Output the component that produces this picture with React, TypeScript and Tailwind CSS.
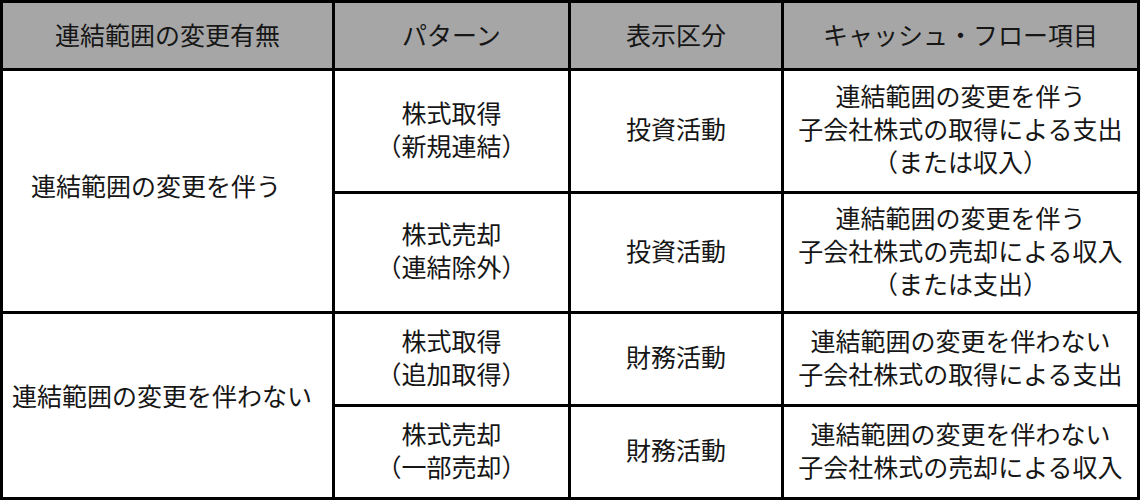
import React from "react";

const font = { fontFamily: '"Noto Sans CJK JP", "Noto Sans", sans-serif' };

function Cell({ children, className = "" }: { children: React.ReactNode; className?: string }) {
  return (
    <div className={`bg-white flex flex-col items-center justify-center text-center pb-[5px] ${className}`}>
      {children}
    </div>
  );
}

function Head({ children }: { children: React.ReactNode }) {
  return (
    <div className="bg-[#a6a6a6] flex items-center justify-center text-center pb-[2px]">{children}</div>
  );
}

export default function App() {
  return (
    <div
      className="w-[1140px] h-[500px] bg-black p-[3px] grid gap-[3px] grid-cols-[329px_233px_210px_353px] grid-rows-[65px_120px_117px_90px_90px] text-[25px] leading-[33px] text-[#161616]"
      style={font}
    >
      <Head>連結範囲の変更有無</Head>
      <Head>パターン</Head>
      <Head>表示区分</Head>
      <Head>キャッシュ・フロー項目</Head>

      <div className="bg-white row-span-2 flex items-center justify-start pl-[28px] pb-[12px]">
        連結範囲の変更を伴う
      </div>
      <Cell>
        <div>株式取得</div>
        <div>（新規連結）</div>
      </Cell>
      <Cell>投資活動</Cell>
      <Cell>
        <div>連結範囲の変更を伴う</div>
        <div>子会社株式の取得による支出</div>
        <div>（または収入）</div>
      </Cell>

      <Cell>
        <div>株式売却</div>
        <div>（連結除外）</div>
      </Cell>
      <Cell>投資活動</Cell>
      <Cell>
        <div>連結範囲の変更を伴う</div>
        <div>子会社株式の売却による収入</div>
        <div>（または支出）</div>
      </Cell>

      <div className="bg-white row-span-2 flex items-center justify-start pl-[9px] pb-[20px]">
        連結範囲の変更を伴わない
      </div>
      <Cell>
        <div>株式取得</div>
        <div>（追加取得）</div>
      </Cell>
      <Cell>財務活動</Cell>
      <Cell>
        <div>連結範囲の変更を伴わない</div>
        <div>子会社株式の取得による支出</div>
      </Cell>

      <Cell>
        <div>株式売却</div>
        <div>（一部売却）</div>
      </Cell>
      <Cell>財務活動</Cell>
      <Cell>
        <div>連結範囲の変更を伴わない</div>
        <div>子会社株式の売却による収入</div>
      </Cell>
    </div>
  );
}
